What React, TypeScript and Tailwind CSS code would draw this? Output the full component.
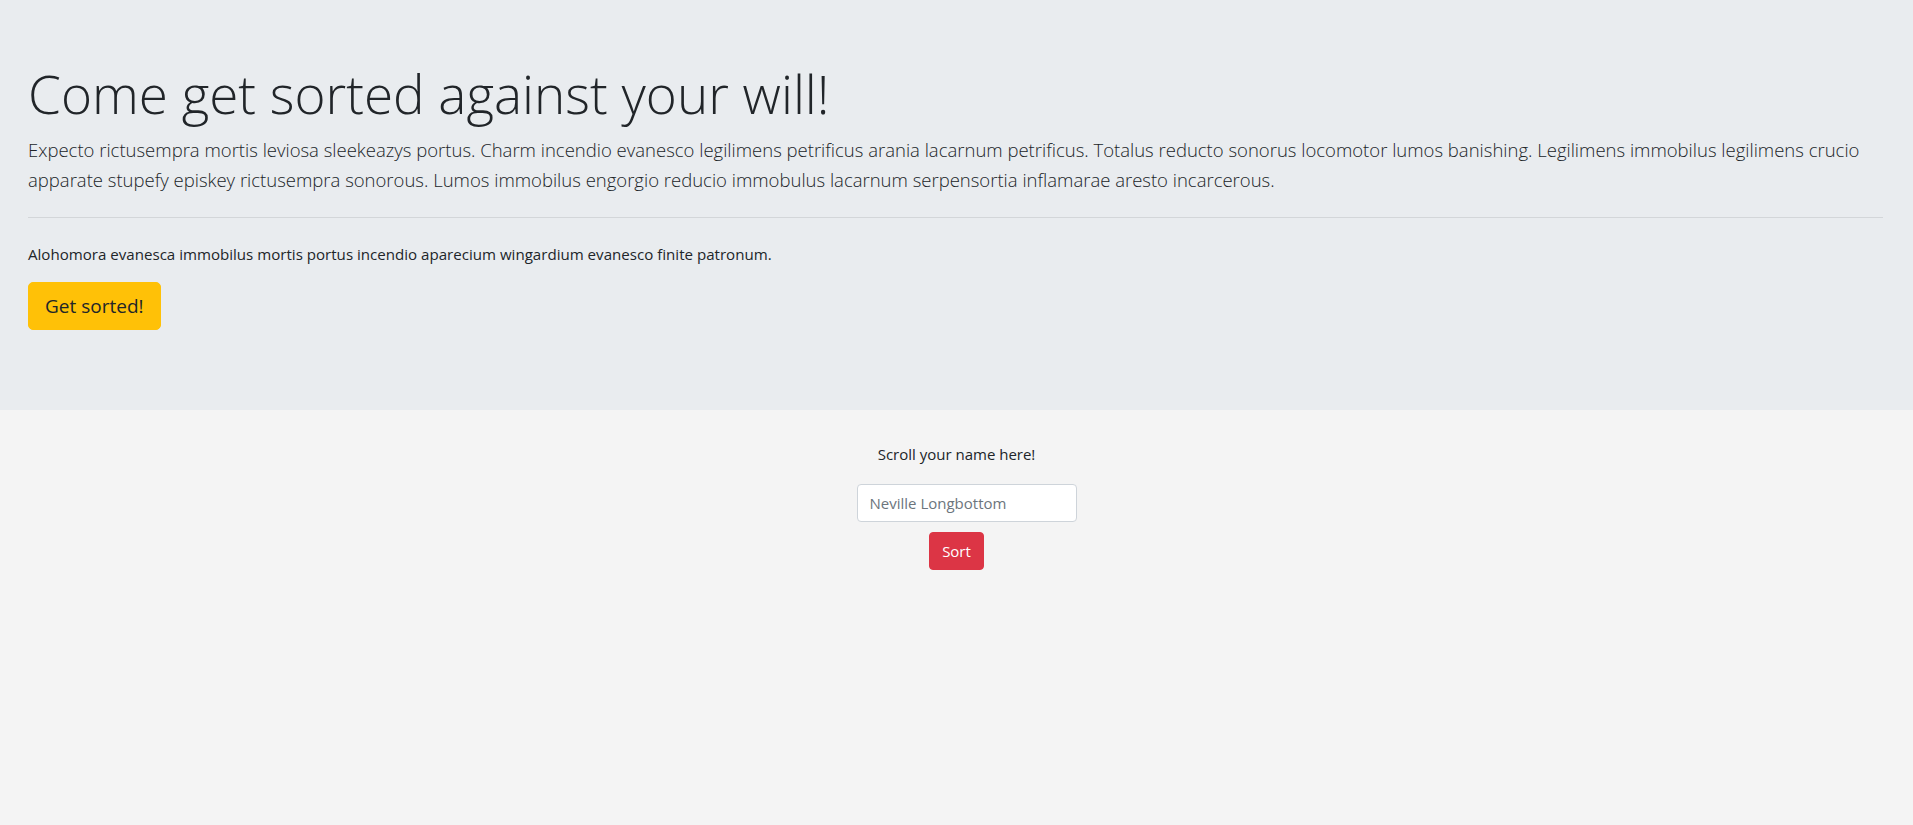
import { useState } from 'react'

const LEAD =
  'Expecto rictusempra mortis leviosa sleekeazys portus. Charm incendio evanesco legilimens petrificus arania lacarnum petrificus. Totalus reducto sonorus locomotor lumos banishing. Legilimens immobilus legilimens crucio apparate stupefy episkey rictusempra sonorous. Lumos immobilus engorgio reducio immobulus lacarnum serpensortia inflamarae aresto incarcerous.'

function App() {
  const [name, setName] = useState('')

  return (
    <div className="min-h-[825px] bg-[#f4f4f4] font-['Open_Sans',sans-serif] text-[#212529]">
      <div className="bg-[#e9ecef] pt-[60px] pb-16 pl-[28px] pr-[30px]">
        <h1 className="text-[53px] leading-[67px] font-light mb-2">Come get sorted against your will!</h1>
        <p className="text-[18.5px] leading-[30px] font-light">{LEAD}</p>
        <hr className="mt-[22px] mb-6 border-0 border-t border-[#d3d6d9]" />
        <p className="text-[15.1px] leading-6 mb-4">
          Alohomora evanesca immobilus mortis portus incendio aparecium wingardium evanesco finite patronum.
        </p>
        <div className="mb-4">
          <button className="bg-[#ffc107] text-[#212529] text-[19px] leading-[30px] px-4 py-2 border border-[#ffc107] rounded-[5px]">
            Get sorted!
          </button>
        </div>
      </div>

      <div className="flex flex-col items-center pt-8">
        <p className="text-[15px] leading-6 mb-[18px]">Scroll your name here!</p>
        <input
          value={name}
          onChange={(e) => setName(e.target.value)}
          placeholder="Neville Longbottom"
          className="ml-5 w-[220px] h-[38px] px-3 text-[15px] bg-white border border-[#ced4da] rounded-[4px] placeholder:text-[#6c757d] outline-none"
        />
        <button className="mt-[10px] h-[38px] px-3 text-[15px] leading-6 bg-[#dc3545] text-white border border-[#dc3545] rounded-[4px]">
          Sort
        </button>
      </div>
    </div>
  )
}

export default App
